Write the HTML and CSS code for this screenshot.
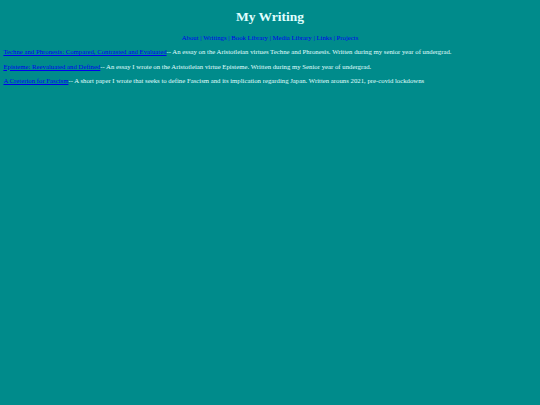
FILE: index.html
```html
<!DOCTYPE html>
<html>
<head>
<meta charset="utf-8">
<title>My Writing</title>
<link rel="stylesheet" href="styles.css">
</head>
<body>
<h1 class="title">My Writing</h1>
<nav class="nav">
<a href="#">About</a> | <a href="#">Writings</a> | <a href="#">Book Library</a> | <a href="#">Media Library</a> | <a href="#">Links</a> | <a href="#">Projects</a>
</nav>
<p class="entry"><a class="doc" href="#">Techne and Phronesis: Compared, Contrasted and Evaluated</a>-- An essay on the Aristotleian virtues Techne and Phronesis. Written during my senior year of undergrad.</p>
<p class="entry"><a class="doc" href="#">Episteme: Reevaluated and Defined</a>-- An essay I wrote on the Aristotleian virtue Episteme. Written during my Senior year of undergrad.</p>
<p class="entry"><a class="doc" href="#">A Creterion for Fascism</a>-- A short paper I wrote that seeks to define Fascism and its implication regarding Japan. Written arouns 2021, pre-covid lockdowns</p>
</body>
</html>
```
FILE: styles.css
```css
html {
  background: #008b8b;
}
body {
  margin: 3.4px;
  font-family: "Liberation Serif", "Times New Roman", serif;
  font-size: 6.75px;
  line-height: 1.15;
  color: #e0ffff;
  background: #008b8b;
}
.title {
  font-size: 13.5px;
  font-weight: bold;
  text-align: center;
  margin: 6px 0 9px;
  line-height: 1.15;
}
.nav {
  text-align: center;
  margin: 0 0 6px;
  color: #0000ee;
}
.nav a {
  color: #0000ee;
  text-decoration: none;
}
.entry {
  margin: 6.7px 0;
}
.doc {
  color: #0000ee;
  text-decoration: underline;
}
```
